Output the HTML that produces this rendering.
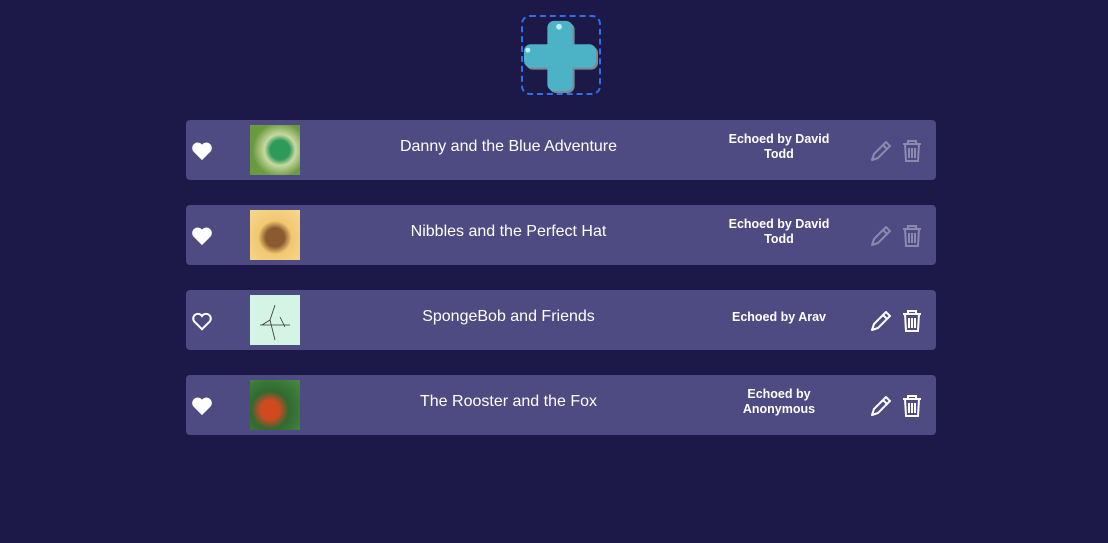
<!DOCTYPE html><html><head><style>
body{margin:0;background:#1c1848;width:1108px;height:543px;overflow:hidden;font-family:"Liberation Sans",sans-serif;position:relative}
.add{position:absolute;left:521px;top:15px;width:76px;height:76px;border:2px dashed #2f6fe8;border-radius:9px}
.card{position:absolute;left:186px;width:750px;height:60px;background:#4e4a82;border-radius:4px;color:#fff}
.heart{position:absolute;left:191px;top:21px}
.thumb{position:absolute;left:64px;top:5px;width:50px;height:50px}
.title{position:absolute;left:160px;width:325px;top:-3px;line-height:60px;text-align:center;font-size:16px}
.echo{position:absolute;left:533px;width:120px;top:-3px;height:60px;display:flex;align-items:center;justify-content:center;text-align:center;font-weight:bold;font-size:12.5px;line-height:15px}
.icons{position:absolute;left:684px;top:18px}
.dim{opacity:.35}
</style></head><body>
<div class="add"><svg width="76" height="76" viewBox="0 0 78 78" style="position:absolute;left:0;top:0">
<path d="M32 4h12a7 7 0 0 1 7 7v17h17a7 7 0 0 1 7 7v10a7 7 0 0 1-7 7H51v17a7 7 0 0 1-7 7H32a7 7 0 0 1-7-7V52H8a7 7 0 0 1-7-7V35a7 7 0 0 1 7-7h17V11a7 7 0 0 1 7-7z" fill="#7a8a94" transform="translate(2,2)"/>
<path d="M32 4h12a7 7 0 0 1 7 7v17h17a7 7 0 0 1 7 7v10a7 7 0 0 1-7 7H51v17a7 7 0 0 1-7 7H32a7 7 0 0 1-7-7V52H8a7 7 0 0 1-7-7V35a7 7 0 0 1 7-7h17V11a7 7 0 0 1 7-7z" fill="#4cb2c6"/>
<circle cx="37" cy="10" r="3" fill="#bdf0f8"/><circle cx="5" cy="34" r="2.5" fill="#bdf0f8"/></svg></div>

<div class="card" style="top:120px">
<svg class="heart" style="left:5px" width="22" height="20" viewBox="0 0 24 22"><path d="M12 21 2.5 11.5A5.5 5.5 0 0 1 12 4a5.5 5.5 0 0 1 9.5 7.5z" fill="#fff"/></svg>
<div class="thumb" style="background:radial-gradient(circle at 60% 50%,#2e9a5a 0 25%,#c8d9a0 40%,#6a9a40 70%)"></div>
<div class="title">Danny and the Blue Adventure</div>
<div class="echo">Echoed by David<br>Todd</div>
<svg class="icons dim" width="56" height="26" viewBox="0 0 56 26"><path d="M2 22l2-6 12-12 4 4-12 12z M13 7l4 4" stroke="#fff" stroke-width="2" fill="none" stroke-linejoin="round"/><path d="M33 6h18M38 6V3h8v3M35 6l1 17h12l1-17M39 10v10M42 10v10M45 10v10" stroke="#fff" stroke-width="2" fill="none"/></svg>
</div>

<div class="card" style="top:205px">
<svg class="heart" style="left:5px" width="22" height="20" viewBox="0 0 24 22"><path d="M12 21 2.5 11.5A5.5 5.5 0 0 1 12 4a5.5 5.5 0 0 1 9.5 7.5z" fill="#fff"/></svg>
<div class="thumb" style="background:radial-gradient(circle at 50% 55%,#8a5a30 0 25%,#f2c870 45%,#f5d890)"></div>
<div class="title">Nibbles and the Perfect Hat</div>
<div class="echo">Echoed by David<br>Todd</div>
<svg class="icons dim" width="56" height="26" viewBox="0 0 56 26"><path d="M2 22l2-6 12-12 4 4-12 12z M13 7l4 4" stroke="#fff" stroke-width="2" fill="none" stroke-linejoin="round"/><path d="M33 6h18M38 6V3h8v3M35 6l1 17h12l1-17M39 10v10M42 10v10M45 10v10" stroke="#fff" stroke-width="2" fill="none"/></svg>
</div>

<div class="card" style="top:290px">
<svg class="heart" style="left:5px" width="22" height="20" viewBox="0 0 24 22"><path d="M12 20 3.2 11.2A5 5 0 0 1 12 5.5a5 5 0 0 1 8.8 5.7z" fill="none" stroke="#fff" stroke-width="2.2"/></svg>
<div class="thumb" style="background:#d4f5e6"><svg width="50" height="50"><path d="M10 30h30M25 10l-5 15 5 20M20 25l-8 5M30 22l5 10" stroke="#333" stroke-width=".8" fill="none"/></svg></div>
<div class="title">SpongeBob and Friends</div>
<div class="echo">Echoed by Arav</div>
<svg class="icons" width="56" height="26" viewBox="0 0 56 26"><path d="M2 22l2-6 12-12 4 4-12 12z M13 7l4 4" stroke="#fff" stroke-width="2" fill="none" stroke-linejoin="round"/><path d="M33 6h18M38 6V3h8v3M35 6l1 17h12l1-17M39 10v10M42 10v10M45 10v10" stroke="#fff" stroke-width="2" fill="none"/></svg>
</div>

<div class="card" style="top:375px">
<svg class="heart" style="left:5px" width="22" height="20" viewBox="0 0 24 22"><path d="M12 21 2.5 11.5A5.5 5.5 0 0 1 12 4a5.5 5.5 0 0 1 9.5 7.5z" fill="#fff"/></svg>
<div class="thumb" style="background:radial-gradient(circle at 40% 60%,#d04a20 0 22%,#2f6a30 45%,#4a8a40)"></div>
<div class="title">The Rooster and the Fox</div>
<div class="echo">Echoed by<br>Anonymous</div>
<svg class="icons" width="56" height="26" viewBox="0 0 56 26"><path d="M2 22l2-6 12-12 4 4-12 12z M13 7l4 4" stroke="#fff" stroke-width="2" fill="none" stroke-linejoin="round"/><path d="M33 6h18M38 6V3h8v3M35 6l1 17h12l1-17M39 10v10M42 10v10M45 10v10" stroke="#fff" stroke-width="2" fill="none"/></svg>
</div>
</body></html>
